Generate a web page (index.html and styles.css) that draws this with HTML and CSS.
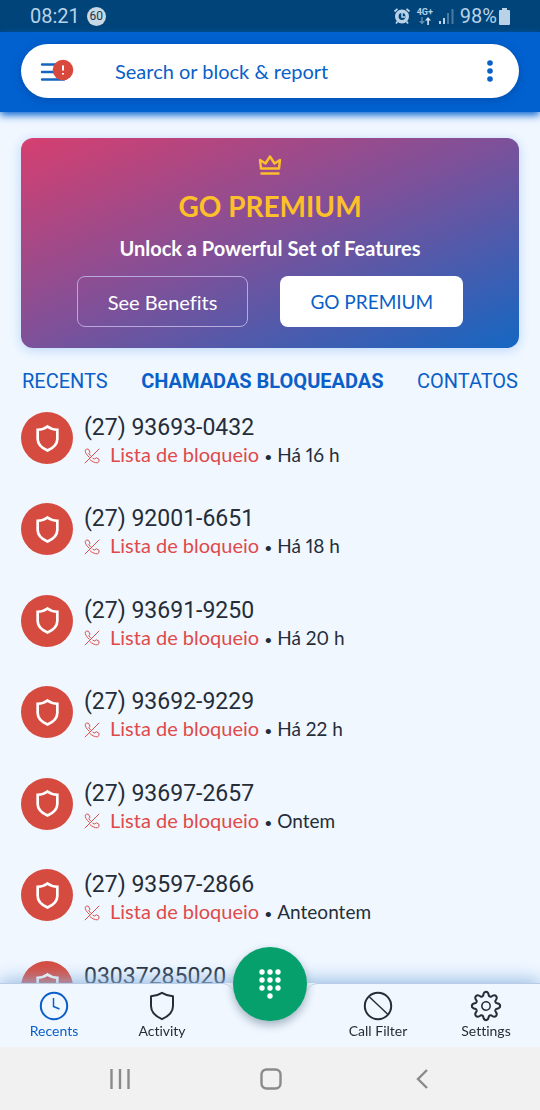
FILE: index.html
```html
<!DOCTYPE html>
<html lang="pt-BR">
<head>
<meta charset="utf-8">
<meta name="viewport" content="width=device-width, initial-scale=1">
<title>Chamadas bloqueadas</title>
<link rel="stylesheet" href="styles.css">
</head>
<body>
<svg class="defs" aria-hidden="true">
  <symbol id="shield" viewBox="0 0 28 32"><path d="M14 2.500C11 4.800 7 6 3 6.200V16.500C3 22.500 8.500 27 14 29.500C19.500 27 25 22.500 25 16.500V6.200C21 6 17 4.800 14 2.500Z"/></symbol>
  <symbol id="blocked" viewBox="0 0 16 16"><path d="M15.200 .8L.8 15.200M5.500 9.500C2.500 7 1 4 1.200 2.200L2.800 1L4.500 1.300L6 4.200L4.800 5.800L6.800 8.200M5.800 11.500C8 13.500 11 15 13.500 14.800L15 13.500V11.300L12.500 9.800L10.300 11L8.500 10"/></symbol>
</svg>
<div class="screen">
  <div class="status">
    <time>08:21</time><span class="speed">60</span>
    <div class="status-icons">
      <svg width="18" height="18" viewBox="0 0 18 18"><g fill="none" stroke="#b9d2e8"><circle cx="9" cy="9.500" r="5.200" stroke-width="3.600"/><path stroke-width="1.800" d="M1.500 4.500L4.500 1.800M16.500 4.500L13.500 1.800M4.500 14.500L3 16.500M13.500 14.500L15 16.500"/><path stroke-width="1.500" d="M9 6V10H12"/></g></svg>
      <div class="net"><span>4G+</span><svg width="12" height="8" viewBox="0 0 12 8"><path fill="#5f8bb0" d="M2.300 0h1.400v4H6L3 7.500 0 4h2.300z"/><path fill="#d5e5f4" d="M8.300 8h1.600V3.500H12L9 0 6 3.500h2.300z"/></svg></div>
      <svg width="15" height="16" viewBox="0 0 15 16"><path fill="#b9d2e8" d="M0 13h2v3H0zM4 10h2v6H4z"/><path fill="#497aa3" d="M8 5h2v11H8zM12.500 1h2v15h-2z"/></svg>
      <span class="battery">98%<svg width="11" height="17" viewBox="0 0 11 17"><path fill="#b9d2e8" d="M3 0h5v2h2q1 0 1 1v13q0 1-1 1H1q-1 0-1-1V3q0-1 1-1h2z"/></svg></span>
    </div>
  </div>
  <header class="top">
    <form class="search">
      <button type="button" class="menu" aria-label="Menu"><svg width="34" height="24" viewBox="0 0 34 24"><path d="M2 5.500H20M2 13H20M2 20.500H24" stroke="#1565c0" stroke-width="2.400" stroke-linecap="round"/><circle cx="23" cy="11" r="10.300" fill="#d8483d"/><path d="M23 6.500V11.500M23 14V15.500" stroke="#fff" stroke-width="2"/></svg></button>
      <input type="text" aria-label="Search" placeholder="Search or block &amp; report">
      <button type="button" aria-label="More"><svg width="6" height="22" viewBox="0 0 6 22" fill="#0a5fc8"><circle cx="3" cy="3" r="2.800"/><circle cx="3" cy="11" r="2.800"/><circle cx="3" cy="19" r="2.800"/></svg></button>
    </form>
  </header>
  <main class="content">
    <section class="promo">
      <svg width="24" height="22" viewBox="0 0 24 22" fill="none" stroke="#fdc02a" stroke-width="2.400" stroke-linejoin="round"><path d="M3 14.500L2 6L7.500 9.500L12 2.500L16.500 9.500L22 6L21 14.500ZM2.500 19.500H21.500"/></svg>
      <h1>GO PREMIUM</h1>
      <p>Unlock a Powerful Set of Features</p>
      <div class="actions">
        <button type="button" class="outline">See Benefits</button>
        <button type="button" class="solid">GO PREMIUM</button>
      </div>
    </section>
    <nav class="tabs"><a href="#">RECENTS</a><a href="#" class="active" aria-current="page">CHAMADAS BLOQUEADAS</a><a href="#">CONTATOS</a></nav>
    <ul class="calls">
      <li><span class="avatar"><svg><use href="#shield"/></svg></span><div><h2>(27) 93693-0432</h2><p><svg><use href="#blocked"/></svg><b>Lista de bloqueio</b><i>•</i><time>Há 16 h</time></p></div></li>
      <li><span class="avatar"><svg><use href="#shield"/></svg></span><div><h2>(27) 92001-6651</h2><p><svg><use href="#blocked"/></svg><b>Lista de bloqueio</b><i>•</i><time>Há 18 h</time></p></div></li>
      <li><span class="avatar"><svg><use href="#shield"/></svg></span><div><h2>(27) 93691-9250</h2><p><svg><use href="#blocked"/></svg><b>Lista de bloqueio</b><i>•</i><time>Há 20 h</time></p></div></li>
      <li><span class="avatar"><svg><use href="#shield"/></svg></span><div><h2>(27) 93692-9229</h2><p><svg><use href="#blocked"/></svg><b>Lista de bloqueio</b><i>•</i><time>Há 22 h</time></p></div></li>
      <li><span class="avatar"><svg><use href="#shield"/></svg></span><div><h2>(27) 93697-2657</h2><p><svg><use href="#blocked"/></svg><b>Lista de bloqueio</b><i>•</i><time>Ontem</time></p></div></li>
      <li><span class="avatar"><svg><use href="#shield"/></svg></span><div><h2>(27) 93597-2866</h2><p><svg><use href="#blocked"/></svg><b>Lista de bloqueio</b><i>•</i><time>Anteontem</time></p></div></li>
      <li><span class="avatar"><svg><use href="#shield"/></svg></span><div><h2>03037285020</h2></div></li>
    </ul>
  </main>
</div>
<footer class="dock">
  <nav class="bar">
    <a href="#" class="current"><svg viewBox="0 0 32 32"><circle cx="16" cy="16" r="13.200"/><path stroke-width="1.500" d="M15.500 8V16.500L21.500 19"/></svg>Recents</a>
    <a href="#"><svg viewBox="0 0 32 32"><path d="M16 2.800C12.500 5 9 6 5 6.200V16C5 22 10 26.500 16 29.200C22 26.500 27 22 27 16V6.200C23 6 19.500 5 16 2.800Z"/></svg>Activity</a>
    <button type="button" class="fab" aria-label="Dial pad"><svg width="24" height="30" viewBox="0 0 24 30" fill="#fff"><circle cx="4" cy="3" r="2.700"/><circle cx="12" cy="3" r="2.700"/><circle cx="20" cy="3" r="2.700"/><circle cx="4" cy="11" r="2.700"/><circle cx="12" cy="11" r="2.700"/><circle cx="20" cy="11" r="2.700"/><circle cx="4" cy="19" r="2.700"/><circle cx="12" cy="19" r="2.700"/><circle cx="20" cy="19" r="2.700"/><circle cx="12" cy="27" r="2.700"/></svg></button>
    <a href="#"><svg viewBox="0 0 32 32"><circle cx="16" cy="16" r="13.200"/><path stroke-width="1.500" d="M7.500 7L25.500 24"/></svg>Call Filter</a>
    <a href="#"><svg viewBox="0 0 32 32"><g transform="translate(16 16)"><circle r="4.200" stroke-width="1.500"/><path d="M-2.900-10.200Q-2.400-14.200 0-14.200T2.900-10.200Q4 -9 5.100-9.300Q8.200-11.800 10-10T9.300-5.100Q9 -4 10.200-2.900Q14.200-2.400 14.200 0T10.200 2.900Q9 4 9.300 5.100Q11.800 8.200 10 10T5.100 9.300Q4 9 2.900 10.200Q2.400 14.200 0 14.200T-2.900 10.200Q-4 9-5.100 9.300Q-8.200 11.800-10 10T-9.300 5.100Q-9 4-10.200 2.900Q-14.200 2.400-14.200 0T-10.200-2.900Q-9-4-9.300-5.100Q-11.800-8.200-10-10T-5.100-9.300Q-4-9-2.900-10.200Z"/></g></svg>Settings</a>
  </nav>
  <div class="system">
    <button type="button" aria-label="Recent apps"><svg width="20" height="20"><path d="M1.500 0V20M10 0V20M18.500 0V20"/></svg></button>
    <button type="button" aria-label="Home"><svg width="22" height="22"><rect x="1.500" y="1.500" width="19" height="19" rx="5"/></svg></button>
    <button type="button" aria-label="Back"><svg width="12" height="20"><path d="M11 1L2 10L11 19"/></svg></button>
  </div>
</footer>
</body>
</html>
```

FILE: styles.css
```css
* { box-sizing: border-box; margin: 0; padding: 0; }
body { background: #f0f7ff; color: #252d38; font-family: Lato, "Open Sans", sans-serif; font-variant-ligatures: none; }
a { color: inherit; text-decoration: none; }
button { border: 0; background: none; font: inherit; color: inherit; cursor: pointer; }
svg { display: block; flex: none; }
.defs { position: absolute; width: 0; height: 0; }
.screen { min-height: 100vh; display: flex; flex-direction: column; padding-bottom: 58px; }

.status { height: 32px; display: flex; align-items: center; padding: 0 30px; background: #004479; color: #b9d2e8; font: 20px/32px Roboto, sans-serif; }
.speed { width: 19px; height: 19px; margin-left: 7px; border-radius: 50%; background: #c8d8e4; color: #16364f; font-size: 12px; line-height: 19px; text-align: center; }
.status-icons { margin-left: auto; display: flex; align-items: center; gap: 6px; }
.net { display: flex; flex-direction: column; align-items: center; font-size: 9px; font-weight: 700; line-height: 9px; }
.battery { display: flex; align-items: center; gap: 2px; }

.top { padding: 12px 21px 14px; background: #0061cf; box-shadow: 0 3px 8px #0061cf; }
.search { height: 54px; display: flex; align-items: center; padding: 0 26px 0 19px; border-radius: 27px; background: #fff; box-shadow: 0 2px 8px #0050b0; }
.search input { flex: 1; min-width: 0; margin-left: 41px; border: 0; outline: 0; background: none; color: #0a5fc8; font: 20px/28px Lato, sans-serif; }
.search input::placeholder { color: #0a5fc8; opacity: 1; }

.content { flex: 1; display: flex; flex-direction: column; padding: 26px 21px 0; }
.promo { display: flex; flex-direction: column; align-items: center; padding: 16px 16px 21px; border-radius: 12px; background: linear-gradient(to bottom right, #d63f6f, #7c519a 50%, #1467c2); box-shadow: 0 2px 12px #b9d6f8; color: #fff; }
.promo h1 { margin-top: 10px; color: #fdc02a; font-size: 28px; line-height: 40px; }
.promo p { margin-top: 8px; font-size: 20px; font-weight: 700; line-height: 28px; }
.actions { display: flex; gap: 32px; margin-top: 14px; font-size: 20px; }
.actions button { height: 51px; border-radius: 8px; padding: 0 30px; }
.outline { border: 1px solid #b9a9dc; }
.actions .solid { background: #fff; color: #0a5fc8; font-size: 19px; }

.tabs { display: flex; justify-content: space-between; margin-top: 18px; padding: 0 1px; color: #0a5fc8; font: 20px/30px Roboto, sans-serif; }
.tabs .active { font-weight: 700; }

.calls { flex: 1; display: grid; grid-auto-rows: 1fr; margin-top: 16px; list-style: none; }
.calls li { display: flex; align-items: flex-start; gap: 11px; }
.avatar { width: 52px; height: 52px; display: grid; place-items: center; border-radius: 50%; background: #d64b3f; }
.avatar svg { width: 25px; height: 29px; fill: none; stroke: #fff; stroke-width: 3; }
.calls h2 { font: 23px/32px Roboto, sans-serif; }
.calls p { display: flex; align-items: baseline; font-size: 20px; line-height: 20px; }
.calls p svg { align-self: center; width: 16px; height: 16px; margin-right: 10px; fill: none; stroke: #d8504c; stroke-width: 1; }
.calls b { color: #df4a4a; font-weight: 400; }
.calls i { margin: 0 5px; font: 14px/20px Lato, sans-serif; }
.calls time { font-size: 19px; font-variant-numeric: proportional-nums; }

.dock { position: fixed; inset: auto 0 0; }
.bar { position: relative; height: 64px; display: grid; grid-template-columns: repeat(5, 1fr); background: linear-gradient(transparent 12px, #f0f7ff 12px); box-shadow: 0 -2px 18px #8fb6e2; font-size: 14px; line-height: 18px; }
.bar::before, .bar::after { content: ""; position: absolute; top: 0; width: calc(50% - 36px); height: 12px; background: #f0f7ff; border-top: 1px solid #b8cce3; }
.bar::before { left: 0; border-top-right-radius: 12px; }
.bar::after { right: 0; border-top-left-radius: 12px; }
.bar a { z-index: 1; display: flex; flex-direction: column; align-items: center; padding-top: 7px; }
.bar a svg { width: 32px; height: 32px; fill: none; stroke: currentColor; stroke-width: 2; stroke-linejoin: round; }
.bar .current { color: #0a5fc8; }
.fab { z-index: 1; justify-self: center; width: 74px; height: 74px; margin-top: -36px; display: grid; place-items: center; border-radius: 50%; background: #05a06b; box-shadow: 0 4px 10px #9fb0bf; }
.system { position: relative; height: 63px; display: grid; grid-template-columns: repeat(3, 1fr); padding: 0 43px 0 45px; background: #f1f1f1; }
.system button { display: grid; place-items: center; }
.system svg { fill: none; stroke: #8a8a8a; stroke-width: 2.4; }
```
